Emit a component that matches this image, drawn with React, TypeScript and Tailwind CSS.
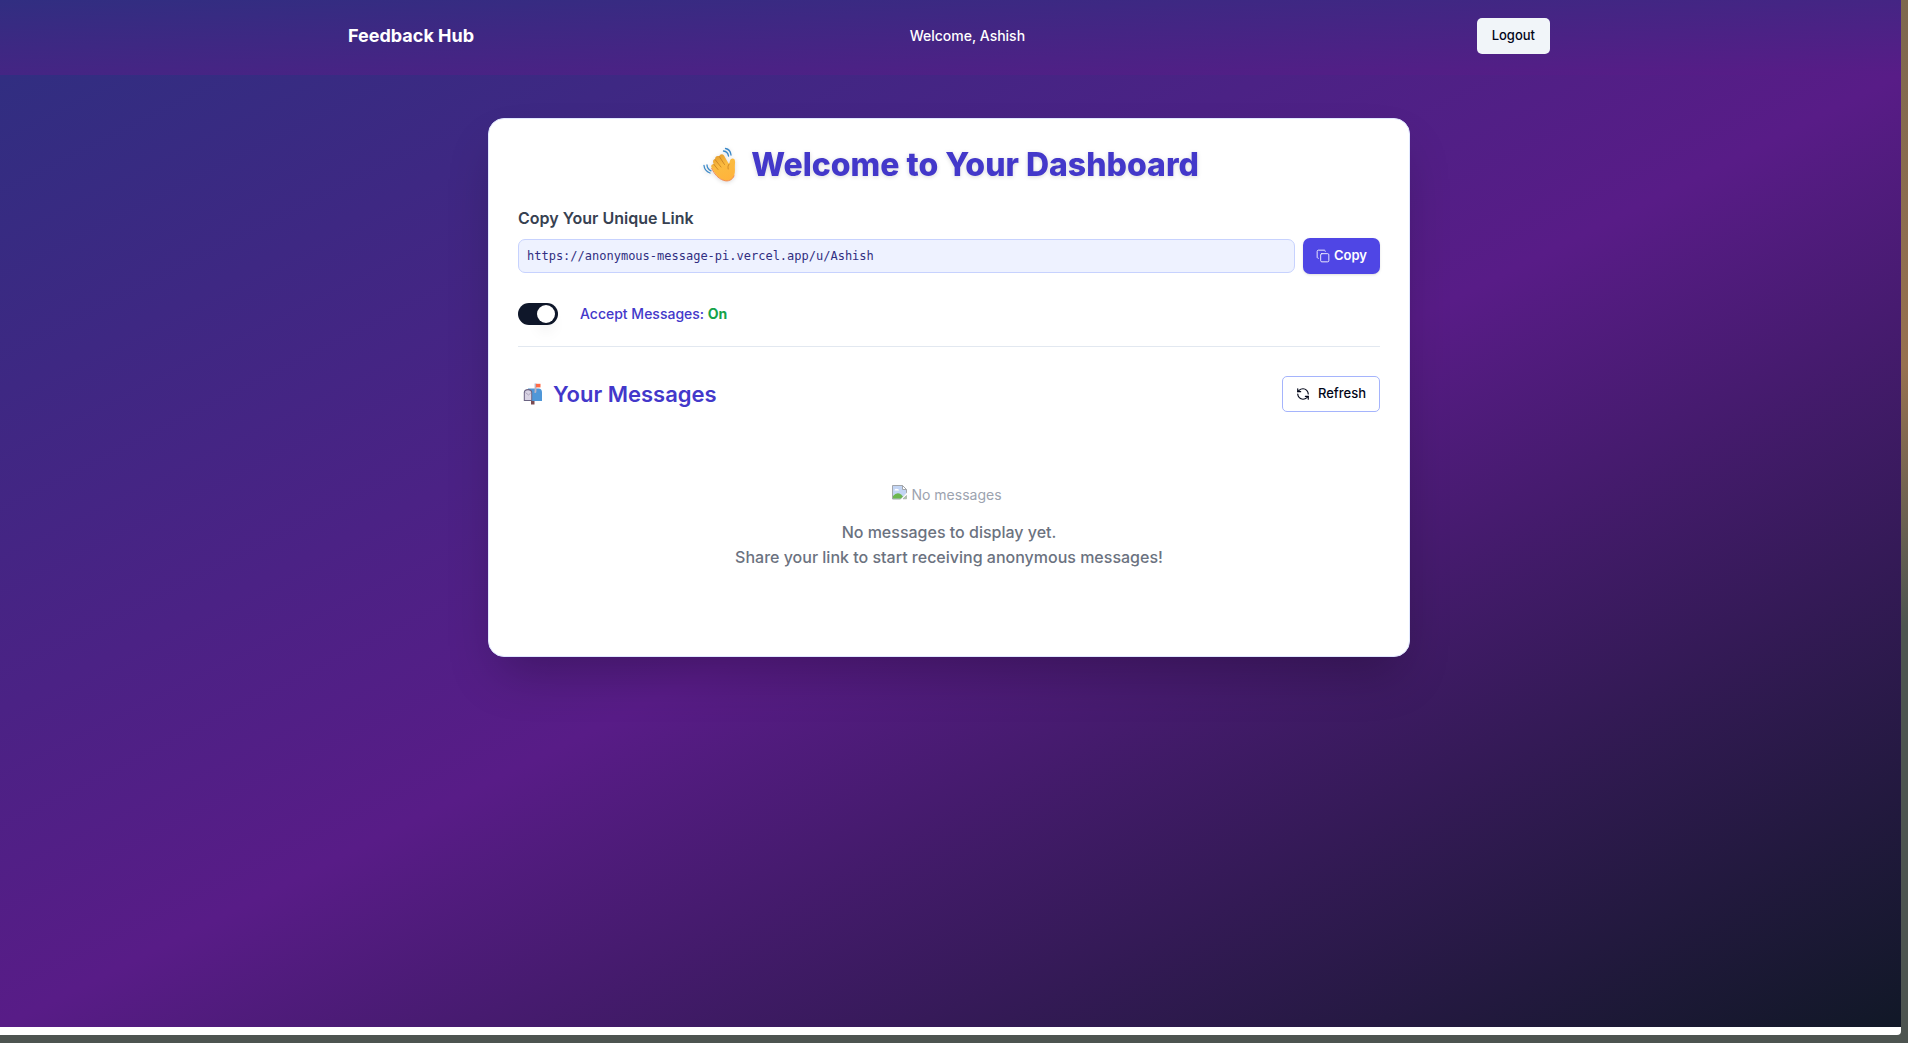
import React from "react";
import { Copy, RefreshCcw } from "lucide-react";

function WavingHand() {
  return (
    <svg viewBox="0 0 36 36" className="h-9 w-9 shrink-0" aria-hidden="true">
      <defs>
        <linearGradient id="hand" gradientUnits="userSpaceOnUse" x1="12" y1="6" x2="24" y2="34">
          <stop offset="0" stopColor="#e0982a" />
          <stop offset="0.45" stopColor="#fbbb40" />
          <stop offset="1" stopColor="#ffb33c" />
        </linearGradient>
      </defs>
      <path
        d="M8.500 20.500 C7.500 18.500 9 16.800 10.800 17.300 C9.500 14.500 9.800 12.500 12 12.200 C12.200 9.500 14 8.300 16.200 9.300 C17 7 19.600 6.600 21 8.600 L25 15.500 L26.200 17 C27 14 27 11.800 29.500 11.500 C32.500 11.500 32.300 15 31.900 18 C31.600 21 32.500 24 31.300 28 C29.800 33 25 35 20.500 33.300 C15 31 11.500 26 8.500 20.500 Z"
        fill="url(#hand)"
      />
      <path d="M8.500 21 C11.500 27 15 31.500 20.500 33.300 C25 35 29.500 33 31.200 28.500" stroke="#f28a52" strokeWidth="1" fill="none" />
      <path d="M10.800 17.300 L15 22.500 M12 12.500 L18 20 M16.300 9.500 L21.500 17.500 M26.200 17 C24.800 18.500 24.800 20 25.200 22" stroke="#cc8424" strokeWidth="0.900" fill="none" strokeLinecap="round" />
      <path d="M22.500 1.500 Q27.500 2.500 28 8 M20.500 4 Q24.800 4.500 25.500 9 M1 18.500 Q1.500 24 7 26 M4 18 Q4.200 22 8 23.800" stroke="#3a88c8" strokeWidth="1.300" fill="none" strokeLinecap="round" />
    </svg>
  );
}

function Mailbox() {
  return (
    <svg viewBox="0 0 20 22" className="h-[22px] w-5 shrink-0" aria-hidden="true">
      <rect x="8" y="16" width="3.500" height="5.500" fill="#7b4b52" />
      <path d="M5 5.500 H15.500 Q19 5.500 19 9.500 V18 H5 Z" fill="#4f97d8" />
      <path d="M0.800 18 V9.500 Q0.800 6 5 6 Q9.200 6 9.200 9.500 V18 Z" fill="#6b6382" />
      <path d="M1.800 17 V10 Q1.800 7.200 5 7.200 Q8.200 7.200 8.200 10 V17 Z" fill="#d9d3e4" />
      <path d="M2.500 9.500 L5.500 12 L7.800 10" stroke="#a39bb3" strokeWidth="0.800" fill="none" />
      <path d="M11.600 0.500 H13.400 V8.500 Q13.400 10 12 10 Q10.800 10 11.600 8 Z" fill="#b9b4c6" />
      <rect x="13" y="0.800" width="4.500" height="3.600" fill="#ff6a45" />
    </svg>
  );
}

function BrokenImage() {
  return (
    <svg viewBox="0 0 15 15" className="mb-1.5 h-[15px] w-[15px] shrink-0" aria-hidden="true">
      <path d="M0.500 0.500 H10.500 L14.500 4.500 V9 L9 14 H0.500 Z" fill="#c3d5f4" stroke="#a3a6ab" />
      <path d="M1 13.500 V11 Q5 6.500 9 9.500 L11 11.500 L9 13.500 Z" fill="#6cb74f" />
      <path d="M2.500 5 Q3.500 3 5 4 Q7 3.500 7 5.500 H2.500 Z" fill="#fff" />
      <path d="M10.500 0.500 V4.500 H14.500 Z" fill="#fff" stroke="#a3a6ab" />
      <path d="M8 15 L15 7.500 V10 L10.500 15 Z" fill="#fff" />
      <path d="M11 13.800 H14.500 V10.500 Z" fill="#a9cf9b" stroke="#a3a6ab" strokeWidth="0.700" />
    </svg>
  );
}

export default function App() {
  const [accepting, setAccepting] = React.useState(true);
  return (
    <div className="flex min-h-screen flex-col bg-linear-to-b from-[#7d674e] via-[#97704f] via-35% to-[#4d5450] to-60% pr-[7px] pb-2 font-['Inter',sans-serif]">
      <div className="flex flex-1 flex-col rounded-br bg-white pb-2">
        <nav className="bg-linear-to-br/srgb from-[#312e81] to-[#581c87] pt-[18px] pr-[25px] pb-[21px] pl-[22px] text-white">
          <div className="mx-auto flex max-w-[1202px] items-center justify-between">
            <a href="#" className="text-lg font-bold">Feedback Hub</a>
            <span className="mr-4 text-sm font-medium">Welcome, Ashish</span>
            <button className="h-9 rounded-[5px] bg-slate-100 px-[15px] text-[13px] font-medium text-slate-950">Logout</button>
          </div>
        </nav>
        <main className="flex-1 bg-linear-to-br/srgb from-[#312e81] via-[#581c87] to-[#111827] pt-[43px] pr-[19px] pb-10 pl-4">
          <section className="mx-auto max-w-[922px] rounded-2xl border border-[#e0e7ff] bg-white px-[29px] pt-7 pb-[54px] shadow-2xl">
            <h1 className="flex items-center justify-center gap-3 pl-1 text-[32px] leading-9 font-extrabold text-[#4338ca] drop-shadow-sm">
              <WavingHand />
              Welcome to Your Dashboard
            </h1>
            <label htmlFor="link" className="mt-[23px] block text-base leading-6 font-semibold text-[#374151]">Copy Your Unique Link</label>
            <div className="mt-2 flex items-center gap-2">
              <input id="link" readOnly value="https://anonymous-message-pi.vercel.app/u/Ashish" className="h-[34px] min-w-0 flex-1 rounded-[7px] border border-[#c7d2fe] bg-[#eef2ff] px-2 font-['DejaVu_Sans_Mono',monospace] text-[12px] text-[#312e81]" />
              <button className="flex h-9 items-center gap-1 rounded-[7px] bg-[#4f46e5] px-[13px] text-[13px] font-semibold text-white shadow">
                <Copy size={14} strokeWidth={1.5} />
                Copy
              </button>
            </div>
            <div className="mt-7 flex items-center gap-[22px]">
              <button role="switch" aria-checked={accepting} aria-labelledby="accept" onClick={() => setAccepting(!accepting)} className="flex h-[22px] w-10 items-center justify-end rounded-full bg-[#0f172a] px-[3px] aria-[checked=false]:justify-start">
                <span className="h-[18px] w-[18px] rounded-full bg-white shadow-lg" />
              </button>
              <span id="accept" className="text-sm leading-6 font-medium text-[#4338ca]">
                Accept Messages: <span className="font-bold text-[#16a34a]">{accepting ? "On" : "Off"}</span>
              </span>
            </div>
            <hr className="mt-5 border-slate-200" />
            <div className="mt-[29px] flex items-center justify-between">
              <h2 className="flex items-center gap-2.5 pl-[5px] text-[22px] leading-7 font-semibold text-[#4338ca]">
                <Mailbox />
                Your Messages
              </h2>
              <button className="flex h-9 items-center gap-2 rounded-[5px] border border-[#a5b4fc] bg-white px-[13px] text-[13px] font-medium text-slate-950">
                <RefreshCcw size={14} />
                Refresh
              </button>
            </div>
            <div className="mt-[72px] flex flex-col items-center pb-8 text-center">
              <div className="flex items-center gap-1 pr-1 text-sm leading-[22px] text-[#9ca3af]">
                <BrokenImage />
                No messages
              </div>
              <p className="mt-3.5 text-base leading-[25px] font-medium text-[#6b7280]">
                No messages to display yet.
                <br />
                Share your link to start receiving anonymous messages!
              </p>
            </div>
          </section>
        </main>
      </div>
    </div>
  );
}
